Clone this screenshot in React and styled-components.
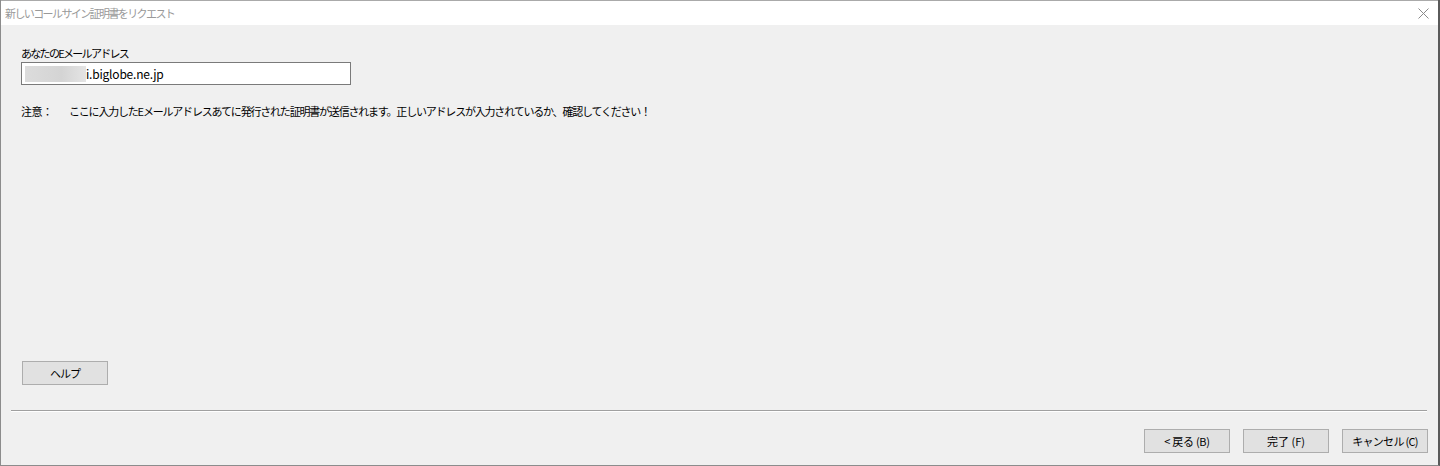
import React from "react";
import styled, { createGlobalStyle } from "styled-components";

const GlobalStyle = createGlobalStyle`
  html, body {
    margin: 0;
    padding: 0;
    background: #f0f0f0;
  }
  * {
    box-sizing: border-box;
  }
`;

const font = `"Noto Sans CJK JP", "Liberation Sans", sans-serif`;

function App() {
  return (
    <>
      <GlobalStyle />
      <Window>
        <TitleBar>
          <Title>新しいコールサイン証明書をリクエスト</Title>
          <CloseBtn aria-label="close">
            <svg width="11" height="11" viewBox="0 0 11 11">
              <path d="M0.5 0.5 L10.5 10.5 M10.5 0.5 L0.5 10.5" stroke="#8a8a8a" strokeWidth="1" />
            </svg>
          </CloseBtn>
        </TitleBar>

        <Body>
          <Label>あなたのEメールアドレス</Label>
          <EmailBox>
            <Blur />
            <span>i.biglobe.ne.jp</span>
          </EmailBox>

          <Note>
            <NoteHead>注意：</NoteHead>
            <span>
              ここに入力したEメールアドレスあてに発行された証明書が送信されます。正しいアドレスが入力されているか、確認してください！
            </span>
          </Note>

          <Spacer />
          <Button $ls={-1}>ヘルプ</Button>
        </Body>

        <Separator />

        <Footer>
          <Button $ls={-0.3}>&lt; 戻る (B)</Button>
          <Button $ls={0}>完了 (F)</Button>
          <Button $ls={-0.7}>キャンセル (C)</Button>
        </Footer>
      </Window>
    </>
  );
}

const Window = styled.div`
  width: 1440px;
  height: 466px;
  display: flex;
  flex-direction: column;
  background: #f0f0f0;
  border-left: 1px solid #8c8c8c;
  border-right: 2px solid #5a5a5a;
  border-bottom: 1px solid #8c8c8c;
  font-family: ${font};
  font-size: 11px;
  color: #000;
`;

const TitleBar = styled.div`
  height: 25px;
  flex-shrink: 0;
  background: #fff;
  display: flex;
  align-items: center;
  justify-content: space-between;
  border-top: 1px solid #aaa;
`;

const Title = styled.div`
  padding-left: 4px;
  color: #999;
  font-size: 11px;
  letter-spacing: -1.6px;
`;

const CloseBtn = styled.div`
  display: flex;
  align-items: center;
  justify-content: center;
  margin-right: 9px;
`;

const Body = styled.div`
  flex: 1;
  display: flex;
  flex-direction: column;
  padding: 20px 0 25px 20px;
`;

const Label = styled.div`
  line-height: 16px;
  margin-bottom: 1px;
  letter-spacing: -1.7px;
`;

const EmailBox = styled.div`
  width: 330px;
  height: 23px;
  border: 1px solid #7a7a7a;
  background: #fff;
  display: flex;
  align-items: center;
  padding-left: 3px;
  font-size: 12px;
  span {
    line-height: 16px;
    letter-spacing: -0.2px;
  }
`;

const Blur = styled.div`
  width: 61px;
  height: 16px;
  background: linear-gradient(90deg, #dcdcdc, #d4d4d4 60%, #e4e4e4);
`;

const Note = styled.div`
  display: flex;
  margin-top: 18px;
  line-height: 16px;
  letter-spacing: -1.2px;
`;

const NoteHead = styled.span`
  width: 48px;
  flex-shrink: 0;
  letter-spacing: -0.5px;
`;

const Spacer = styled.div`
  flex: 1;
`;

const Button = styled.div`
  width: 86px;
  height: 24px;
  margin-left: 1px;
  background: #e1e1e1;
  border: 1px solid #adadad;
  display: flex;
  align-items: center;
  justify-content: center;
  font-size: 11px;
  line-height: 16px;
  letter-spacing: ${(p) => p.$ls}px;
  white-space: nowrap;
`;

const Separator = styled.div`
  height: 2px;
  margin: 0 11px 0 10px;
  border-top: 1px solid #a0a0a0;
  border-bottom: 1px solid #fff;
  flex-shrink: 0;
`;

const Footer = styled.div`
  display: flex;
  justify-content: flex-end;
  gap: 12px;
  padding: 17px 10px 12px 0;
`;

export default App;
